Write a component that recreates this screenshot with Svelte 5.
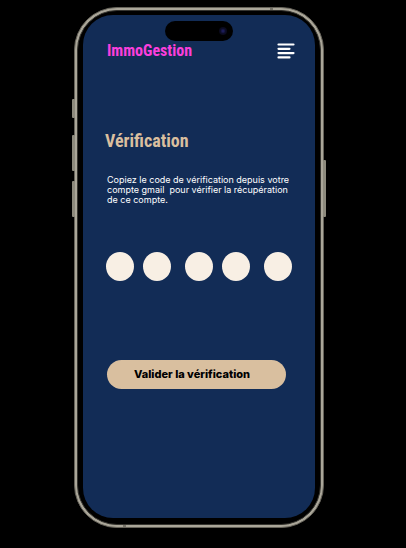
<script>
  const groups = [[0, 1], [2, 3], [4]];
  let digits = $state(['', '', '', '', '']);
</script>

<div class="stage">
  <div class="phone">
    <span class="key silent"></span>
    <span class="key up"></span>
    <span class="key down"></span>
    <span class="key power"></span>
    <span class="seam top"></span>
    <span class="seam bottom"></span>
    <div class="bezel">
      <main class="screen">
        <div class="island"><span class="lens"></span></div>
        <header>
          <span class="brand">ImmoGestion</span>
          <button class="menu" type="button" aria-label="Menu">
            <svg viewBox="0 0 18 16" width="18" height="16" fill="none" stroke="#fff" stroke-width="2.2" stroke-linecap="round">
              <path d="M1.5 1.5h15M1.5 5.8h11M1.5 10.1h15M1.5 14.4h11" />
            </svg>
          </button>
        </header>
        <h1>Vérification</h1>
        <p>Copiez le code de vérification depuis votre<br />compte gmail&nbsp; pour vérifier la récupération<br />de ce compte.</p>
        <form onsubmit={(e) => e.preventDefault()}>
          <div class="code">
            {#each groups as group}
              <div class="group">
                {#each group as i}
                  <input type="text" inputmode="numeric" maxlength="1" aria-label={`Chiffre ${i + 1}`} bind:value={digits[i]} />
                {/each}
              </div>
            {/each}
          </div>
          <button class="submit" type="submit">Valider la vérification</button>
        </form>
      </main>
    </div>
  </div>
</div>

<style>
  :global(body) {
    margin: 0;
    background: #000;
  }
  .stage {
    box-sizing: border-box;
    min-height: 100vh;
    padding: 7px 82px 20px 74px;
    background: #000;
    font-family: Inter, "Liberation Sans", sans-serif;
  }
  .phone {
    position: relative;
    box-sizing: border-box;
    max-width: 420px;
    margin: 0 auto;
    aspect-ratio: 250 / 521;
    display: flex;
    border: 1px solid #66635a;
    border-radius: 43px;
    background: #aaa699;
    padding: 2px;
  }
  .bezel {
    flex: 1;
    display: flex;
    box-sizing: border-box;
    border: 1px solid #35342f;
    border-radius: 40px;
    background: #000;
    padding: 4px 5px 6px;
  }
  .screen {
    position: relative;
    flex: 1;
    box-sizing: border-box;
    padding: 26px 20px 20px 24px;
    border-radius: 30px;
    background: #122c56;
  }
  .key {
    position: absolute;
    left: -3px;
    width: 3px;
    border-radius: 1px;
    background: #8d8a7d;
  }
  .silent { top: 91px; height: 19px; }
  .up { top: 127px; height: 36px; }
  .down { top: 173px; height: 36px; }
  .power {
    left: auto;
    right: -3px;
    top: 152px;
    height: 57px;
  }
  .seam {
    position: absolute;
    background: #77746a;
  }
  .seam.top { top: 0; right: 50px; width: 3px; height: 2px; }
  .seam.bottom { bottom: 0; left: 48px; width: 3px; height: 2px; }
  .island {
    position: absolute;
    top: 6px;
    left: 50%;
    width: 68px;
    height: 20px;
    margin-left: -34px;
    border-radius: 10px;
    background: #000;
  }
  .lens {
    position: absolute;
    top: 6px;
    right: 6px;
    width: 8px;
    height: 8px;
    border-radius: 50%;
    background: radial-gradient(circle, #1c1c58 0 15%, #0c0c26 45%, #050509 100%);
  }
  header {
    display: flex;
    align-items: center;
    justify-content: space-between;
    height: 20px;
  }
  .brand, h1 {
    font-family: "Roboto Condensed", Roboto, sans-serif;
    font-weight: 700;
  }
  .brand {
    color: #fb3fdc;
    font-size: 16px;
    line-height: 20px;
  }
  .menu {
    display: block;
    padding: 0;
    border: 0;
    background: none;
  }
  .menu svg { display: block; }
  h1 {
    margin: 68px 0 0 -2px;
    color: #dabf9f;
    font-size: 18px;
    line-height: 24px;
  }
  p {
    margin: 22px 0 0;
    color: #fff;
    font-size: 9px;
    line-height: 10px;
    white-space: nowrap;
  }
  form { margin: 47px 0 0 -1px; }
  .code {
    display: flex;
    gap: 14px;
  }
  .group {
    display: flex;
    gap: 9px;
  }
  input {
    box-sizing: border-box;
    width: 28px;
    height: 29px;
    padding: 0;
    border: 0;
    border-radius: 50%;
    background: #f8efe4;
    color: #122c56;
    font: 700 12px Inter, sans-serif;
    text-align: center;
  }
  .submit {
    display: block;
    box-sizing: border-box;
    width: calc(100% - 10px);
    height: 29px;
    margin: 79px 0 0 1px;
    padding: 0 27px 1px;
    border: 0;
    border-radius: 15px;
    background: #d9bf9f;
    color: #000;
    font: 800 11px Inter, "Liberation Sans", sans-serif;
    text-align: left;
    white-space: nowrap;
  }
</style>
